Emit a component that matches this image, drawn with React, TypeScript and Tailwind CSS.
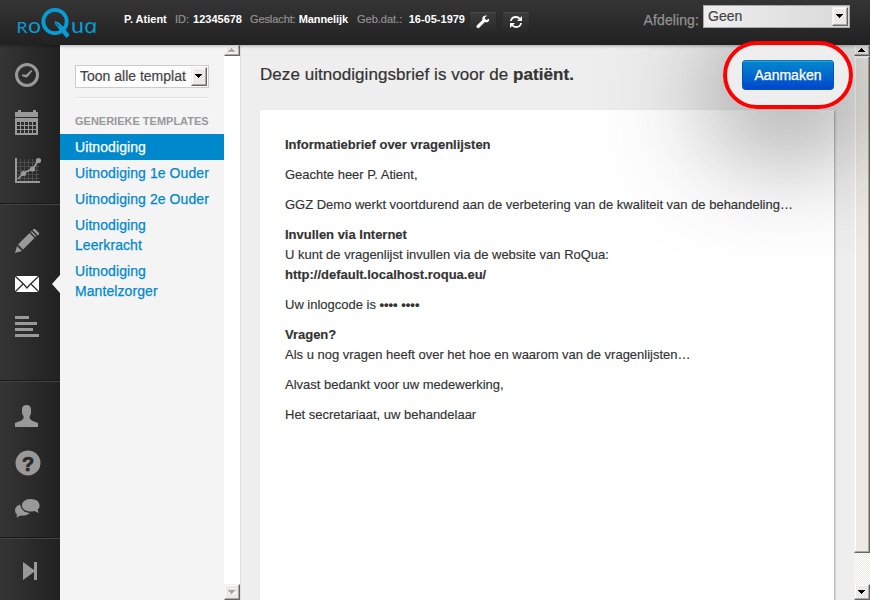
import type { ReactNode } from 'react';

function Logo() {
  return (
    <svg width="84" height="34" viewBox="0 0 84 34" className="ml-4 mt-[6px] shrink-0" fill="none">
      <g fill="#079cd8" fontFamily="Lato, sans-serif" fontSize="16">
        <text x="0.500" y="27" textLength="11" lengthAdjust="spacingAndGlyphs">R</text>
        <text x="12" y="27" fontSize="21" textLength="13" lengthAdjust="spacingAndGlyphs">o</text>
        <text x="55" y="27" fontSize="21" textLength="13" lengthAdjust="spacingAndGlyphs">u</text>
        <text transform="translate(69 27) skewX(12)" fontFamily="'Open Sans', sans-serif" fontStyle="italic" fontSize="20" textLength="13.500" lengthAdjust="spacingAndGlyphs">a</text>
      </g>
      <circle cx="39" cy="15.500" r="11.700" stroke="#079cd8" strokeWidth="3.800" />
      <path d="m43.500 20 8.500 10.500" stroke="#079cd8" strokeWidth="4.400" />
      <path d="m38.500 15 5 1.700 3 4.300-3 2-4-4z" fill="#079cd8" />
      <path d="m40.500 17.500 2.500 3" stroke="#2b2b2b" strokeWidth="1" />
    </svg>
  );
}

function Glyph({ className, children, h = 26 }: { className: string; children: ReactNode; h?: number }) {
  return (
    <svg width="28" height={h} viewBox={`0 0 28 ${h}`} className={`ml-[14px] block shrink-0 ${className}`} fill="#999">
      {children}
    </svg>
  );
}

function Divider({ className }: { className: string }) {
  return <div className={`h-[2px] shrink-0 border-b border-t border-b-[#424242] border-t-[#191919] ${className}`} />;
}

function Rail() {
  return (
    <nav className="relative flex w-[60px] shrink-0 flex-col bg-linear-to-r from-[#353535] to-[#212121]">
      <Glyph className="mt-[17px]">
        <circle cx="13" cy="13" r="10.500" fill="none" stroke="#999" strokeWidth="3" />
        <path d="m8 12.600 4 .2 5.300-4.700 1 1-4.500 5.600-2 .7-3.800-1.300z" />
      </Glyph>
      <Glyph className="mt-[20px]" h={28}>
        <path d="M1 4h3V2h3v2h12V2h3v2h2v5H1zM1 10h23v17H1z" />
        <path d="M3 14h3v3H3zM7 14h3v3H7zM11 14h3v3h-3zM15 14h3v3h-3zM19 14h3v3h-3zM3 18h3v3H3zM7 18h3v3H7zM11 18h3v3h-3zM15 18h3v3h-3zM19 18h3v3h-3zM3 22h3v3H3zM7 22h3v3H7zM11 22h3v3h-3zM15 22h3v3h-3zM19 22h3v3h-3z" fill="#2c2c2c" />
      </Glyph>
      <Glyph className="mt-[21px]" h={28}>
        <path d="M6.500 2v22M10.500 2v22M14.500 2v22M18.500 2v22M22.500 2v22M3 5.500h22M3 9.500h22M3 13.500h22M3 17.500h22M3 21.500h22" stroke="#4c4c4c" />
        <path d="M2 1v24h24" stroke="#999" strokeWidth="2" fill="none" />
        <path d="m4 22 5.500-6 9-4 6-8.500" stroke="#999" strokeWidth="1.800" fill="none" />
        <circle cx="9.500" cy="16.500" r="2.600" /><circle cx="18.500" cy="12" r="2.600" /><circle cx="24.500" cy="3.500" r="2.600" />
      </Glyph>
      <Divider className="mt-[18px]" />
      <Glyph className="mt-[23px]">
        <path d="m1 25 2-7 5 5zM4 16.500 15.500 5l5 5L9 21.500zM16.500 4l1-1 5 5-1 1zM18.500 2l1-1h1.500l4 4v1.500l-1 1z" />
      </Glyph>
      <Glyph className="mt-[21px]" h={18}>
        <path d="M1 1h24v16H1z" fill="#fff" />
        <path d="m1 1 9 8.500 3 3.500 3-3.500L25 1M1 17l8-8M25 17l-8-8" stroke="#2b2b2b" strokeWidth="1.300" fill="none" />
      </Glyph>
      <Glyph className="mt-[22px]" h={24}>
        <path d="M1 1h14v3H1zM1 7h22v3H1zM1 13h18v3H1zM1 19h24v3H1z" />
      </Glyph>
      <Divider className="mt-[41px]" />
      <Glyph className="mt-[22px]" h={24}>
        <path d="M8 5.500Q8 1 12.500 1 17 1 17 5.500v3q0 2.200-1.300 3.500v2.500q1 2 8.300 4.500v4H1v-4q7.500-2.500 8.500-4.500V12Q8 10.500 8 8.500z" />
      </Glyph>
      <Glyph className="mt-[21px]" h={28}>
        <circle cx="14" cy="14" r="12.500" />
        <text x="14" y="21.500" textAnchor="middle" fontFamily="Liberation Sans, sans-serif" fontSize="20" fontWeight="bold" stroke="#292929" strokeWidth=".7" fill="#292929">?</text>
      </Glyph>
      <Glyph className="mt-[20px]" h={22}>
        <path d="M6 7.500q-5 2-5 6 0 2.500 2 4l-.5 3 4-2q6 .8 9.500-2.500-8-.3-10-8.500z" />
        <path d="M16.500 2C11 2 8 5 8 8.500s3.500 6 8.500 6q2 0 4-.5l4 2-.8-3.500Q26 10.500 25.500 8q-.5-6-9-6z" />
      </Glyph>
      <Divider className="mt-[18px]" />
      <Glyph className="mt-[22px]" h={20}>
        <path d="m9 1 11 8V1h3v18h-3v-8L9 19z" />
      </Glyph>
      <div className="absolute right-0 top-[230px] h-0 w-0 border-y-[9px] border-r-[8px] border-y-transparent border-r-[#f4f4f4]" />
    </nav>
  );
}

function Arrow({ up, muted }: { up?: boolean; muted?: boolean }) {
  return (
    <svg width="8" height="5" viewBox="0 0 8 5" shapeRendering="crispEdges">
      {muted && <path d={up ? 'M1 5h7V4H1z' : 'M4 5 8 1v1L5 5z'} fill="#fff" />}
      <path d={up ? 'M0 4h7L3.500 0z' : 'M0 0h7L3.500 4z'} fill={muted ? '#aaa69f' : '#000'} />
    </svg>
  );
}

const bevel = 'flex shrink-0 items-center justify-center border border-b-[#666] border-l-[#f4f1ec] border-r-[#666] border-t-[#f4f1ec] bg-[#edeae5] shadow-[inset_-1px_-1px_#aaa,inset_1px_1px_#fff]';

function PatientField({ label, value, className }: { label: string; value: string; className: string }) {
  return (
    <span className={`flex shrink-0 justify-between whitespace-nowrap ${className}`}>
      <span className="text-[#929292] [-webkit-text-stroke:0.2px]">{label}</span>
      <b>{value}</b>
    </span>
  );
}

function Header() {
  return (
    <header className="relative z-10 flex h-[45px] shrink-0 bg-linear-to-b from-[#353535] to-[#212121] shadow-[0_1px_3px_rgba(0,0,0,0.3)]">
      <Logo />
      <div className="ml-6 mt-[12px] flex h-[15px] text-[11px] leading-[15px] text-white">
        <b className="w-[51px] whitespace-nowrap">P. Atient</b>
        <PatientField label="ID:" value="12345678" className="w-[67px]" />
        <PatientField label="Geslacht:" value="Mannelijk" className="ml-2 w-[98px] tracking-[-0.1px]" />
        <PatientField label="Geb.dat.:" value="16-05-1979" className="ml-[9px] w-[108px]" />
      </div>
      <button className="ml-[4px] mt-[12px] flex h-5 w-7 items-center justify-center rounded-[2px] border border-[#292929] border-t-[#494949] bg-linear-to-b from-[#3b3b3b] to-[#292929]">
        <svg width="14" height="14" viewBox="0 0 14 14" fill="#fff"><path d="M13 3.700 10.700 5 9 4l.1-2L11.300.8Q8-.3 6.600 2.200q-.7 1.300-.1 2.800L1 10.200q-1.100 1.100-.1 2.400 1.200 1.100 2.500 0l5.500-5.500q2 .7 3.500-.6Q13.500 5.300 13 3.700z" /></svg>
      </button>
      <button className="ml-[5px] mt-[12px] flex h-5 w-7 items-center justify-center rounded-[2px] border border-[#292929] border-t-[#494949] bg-linear-to-b from-[#3b3b3b] to-[#292929]">
        <svg width="14" height="14" viewBox="0 0 14 14" fill="none" stroke="#fff" strokeWidth="1.800">
          <path d="M2 6q.5-4 5-4 2.300 0 4 2M12 8q-.5 4-5 4-2.300 0-4-2" />
          <path d="M13 1v5H8zM1 13V8h5z" fill="#fff" stroke="none" />
        </svg>
      </button>
      <span className="ml-auto mt-[10px] text-[14px] leading-5 tracking-[0.1px] text-[#929292] [-webkit-text-stroke:0.25px]">Afdeling:</span>
      <div className="ml-[4px] mr-5 mt-[5px] flex h-[23px] w-[147px] shrink-0 justify-between border border-[#aaa] bg-linear-to-r from-[#eee] to-[#d9d9d9] p-[1px] pl-1 text-[14px] leading-[19px] text-[#444] [-webkit-text-stroke:0.2px]">
        <span>Geen</span>
        <span className={`${bevel} h-[19px] w-4`}><Arrow /></span>
      </div>
    </header>
  );
}

const templates = [
  { label: 'Uitnodiging', active: true },
  { label: 'Uitnodiging 1e Ouder' },
  { label: 'Uitnodiging 2e Ouder' },
  { label: 'Uitnodiging Leerkracht' },
  { label: 'Uitnodiging Mantelzorger' },
];

function Templates() {
  return (
    <aside className="flex w-[181px] shrink-0 border-r border-[#ddd]">
      <div className="w-[164px] bg-[#f4f4f4] pt-5">
        <div className="ml-[15px] flex h-[23px] w-[134px] justify-between border border-[#ccc] bg-white p-[1px] pl-1 text-[14px] leading-[19px] text-[#444] [-webkit-text-stroke:0.2px]">
          <span className="w-[108px] overflow-hidden whitespace-nowrap">Toon alle templat</span>
          <span className={`${bevel} h-[19px] w-4`}><Arrow /></span>
        </div>
        <div className="ml-4 mt-[9px] h-[2px] w-[132px] border-b border-t border-b-white border-t-[#e0e0e0]" />
        <h3 className="ml-[15px] mt-[12px] whitespace-nowrap text-[11px] font-bold leading-5 text-[#999]">GENERIEKE TEMPLATES</h3>
        <ul className="mt-[3px] text-[14px] leading-5 tracking-[0.08px] [-webkit-text-stroke:0.25px]">
          {templates.map((t) => (
            <li key={t.label} className={`py-[3px] pl-[15px] pr-[13px] ${t.active ? 'bg-[#0088cc] text-white' : 'text-[#0088cc]'}`}>{t.label}</li>
          ))}
        </ul>
      </div>
      <div className="flex w-4 flex-col justify-between bg-white">
        <span className={`${bevel} h-[11px] w-4`}><Arrow up muted /></span>
        <span className={`${bevel} h-4 w-4`}><Arrow muted /></span>
      </div>
    </aside>
  );
}

function Letter() {
  return (
    <article className="mt-[23px] flex-1 space-y-[10px] bg-white pl-[25px] pt-[25px] text-[13px] leading-5 tracking-[-0.01px] text-[#333] shadow-[1px_1px_2px_rgba(0,0,0,0.3)] [-webkit-text-stroke:0.15px]">
      <p className="font-bold">Informatiebrief over vragenlijsten</p>
      <p>Geachte heer P. Atient,</p>
      <p className="whitespace-nowrap">GGZ Demo werkt voortdurend aan de verbetering van de kwaliteit van de behandeling…</p>
      <p>
        <b>Invullen via Internet</b><br />
        U kunt de vragenlijst invullen via de website van RoQua:<br />
        <b>http://default.localhost.roqua.eu/</b>
      </p>
      <p>Uw inlogcode is <b>•••• ••••</b></p>
      <p>
        <b>Vragen?</b><br />
        Als u nog vragen heeft over het hoe en waarom van de vragenlijsten…
      </p>
      <p>Alvast bedankt voor uw medewerking,</p>
      <p>Het secretariaat, uw behandelaar</p>
    </article>
  );
}

export default function App() {
  return (
    <div className="relative flex h-[600px] w-[870px] flex-col overflow-hidden bg-[#eee] font-['Liberation_Sans',Arial,sans-serif]">
      <Header />
      <div className="flex min-h-0 flex-1">
        <Rail />
        <Templates />
        <main className="relative flex min-w-0 flex-1 overflow-hidden">
          <section className="flex flex-1 flex-col pl-[19px] pr-5">
            <h1 className="mt-[17px] whitespace-nowrap text-[17px] leading-[25px] tracking-[0.05px] text-[#333] [-webkit-text-stroke:0.2px]">Deze uitnodigingsbrief is voor de <b>patiënt.</b></h1>
            <Letter />
          </section>
          <div className="flex w-4 flex-col bg-[repeating-conic-gradient(#fff_0_25%,#edeae5_0_50%)] bg-[length:2px_2px]">
            <span className={`${bevel} h-[11px]`}><Arrow up /></span>
            <span className={`${bevel} h-[497px]`} />
            <span className={`${bevel} mt-auto h-4`}><Arrow /></span>
          </div>
        </main>
      </div>
      <div className="pointer-events-none absolute inset-x-0 bottom-0 top-[45px] overflow-hidden">
        <div className="absolute left-[723px] top-[-4px] h-[68px] w-[130px] rounded-[34px] shadow-[0_20px_120px_rgba(0,0,0,0.8)]" />
      </div>
      <div className="absolute left-[723px] top-[41px] z-20 flex h-[68px] w-[130px] items-center justify-center rounded-[34px] border-4 border-[#f00] bg-[#eee] bg-clip-padding">
        <button className="h-[30px] w-[92px] rounded-[4px] border border-[#0055b5] border-t-[#0077b9] bg-linear-to-b from-[#0088cc] to-[#0044cc] text-[14px] leading-7 text-white shadow-[inset_0_1px_rgba(255,255,255,0.2)] [-webkit-text-stroke:0.3px] [text-shadow:0_-1px_rgba(0,0,0,0.25)]">Aanmaken</button>
      </div>
    </div>
  );
}
